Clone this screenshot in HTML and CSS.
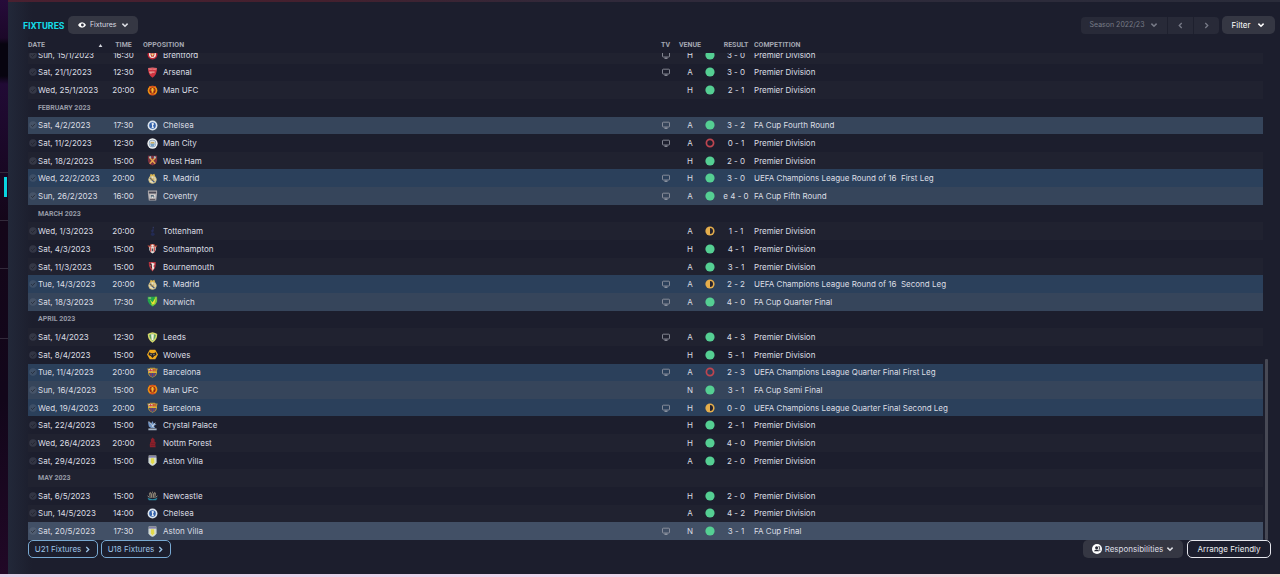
FILE: index.html
```html
<!DOCTYPE html>
<html lang="en">
<head>
<meta charset="utf-8">
<title>Fixtures</title>
<link rel="stylesheet" href="styles.css">
</head>
<body>
<svg class="sprite" aria-hidden="true">
  <symbol id="check" viewBox="0 0 8 8"><circle cx="4" cy="4" r="3.8" fill="#8a90a0" opacity=".2"/><path d="M2.2 4.2 3.5 5.5 6 2.8" fill="none" stroke="#151722" stroke-width="1" opacity=".6"/></symbol>
  <symbol id="chevron" viewBox="0 0 8 8"><path d="M1.4 2.6 4 5.2 6.6 2.6" fill="none" stroke="currentColor" stroke-width="1.5"/></symbol>
  <symbol id="right" viewBox="0 0 8 8"><path d="M2.6 1.2 5.4 4 2.6 6.8" fill="none" stroke="currentColor" stroke-width="1.5"/></symbol>
  <symbol id="left" viewBox="0 0 8 8"><path d="M5.4 1.2 2.6 4 5.4 6.8" fill="none" stroke="currentColor" stroke-width="1.5"/></symbol>
  <symbol id="tv" viewBox="0 0 8 8"><rect x=".5" y="1.2" width="7" height="4.8" rx=".7" fill="none" stroke="#9a9da8" stroke-width=".8"/><path d="M2.5 7.2h3" stroke="#b0b3bc" stroke-width="1"/></symbol>
  <symbol id="win" viewBox="0 0 10 10"><circle cx="5" cy="5" r="4.6" fill="#55cf93"/></symbol>
  <symbol id="loss" viewBox="0 0 10 10"><circle cx="5" cy="5" r="3.6" fill="none" stroke="#bd454f" stroke-width="1.7"/></symbol>
  <symbol id="draw" viewBox="0 0 10 10"><circle cx="5" cy="5" r="4.6" fill="#e5ae4c"/><path d="M5 2a3 3 0 0 1 0 6z" fill="#25232d"/></symbol>

  <symbol id="brentford" viewBox="0 0 12 12"><circle cx="6" cy="6" r="5.4" fill="#c12335"/><circle cx="6" cy="6" r="3.8" fill="#f2e9df"/><path d="M3.4 4.5h5.2L7.4 8.4H4.6z" fill="#c33637"/><path d="M4.5 6 6 7.5 7.5 6 6 5z" fill="#f0d873"/></symbol>
  <symbol id="arsenal" viewBox="0 0 12 12"><path d="M1.2 1.3Q6 .1 10.8 1.3 11 8.600 6 11.600 1 8.600 1.200 1.300z" fill="#cf3340"/><path d="M1.3 1.6Q6 .6 10.700 1.600M1.500 3Q6 2 10.500 3" fill="none" stroke="#ee8c8d" stroke-width=".8"/><path d="M2.300 5h6v1.200h-6zM3.500 6h1.500v1.400H3.500z" fill="#e5a09a"/></symbol>
  <symbol id="manutd" viewBox="0 0 12 12"><circle cx="6" cy="6" r="5.3" fill="#ee8f12"/><path d="M2.200 1.200h7.600L9.300 2.400H2.700zM2.500 9.800h7L8 11.200H4z" fill="#d8521c"/><circle cx="6" cy="6" r="3.400" fill="#8c1f14"/><path d="M5 3.300h2v5.200H5zM3.900 4.800h4.200v1.200H3.900z" fill="#f7b92c"/></symbol>
  <symbol id="chelsea" viewBox="0 0 12 12"><circle cx="6" cy="6" r="5.400" fill="#dbe5ef"/><circle cx="6" cy="6" r="3.600" fill="#3462ab"/><path d="M5 3.500 7 3l.6 1.500-1 1.500 1 2.700H5l.6-2z" fill="#e6edf3"/></symbol>
  <symbol id="mancity" viewBox="0 0 12 12"><circle cx="6" cy="6" r="5.600" fill="#eef1f2"/><circle cx="6" cy="6" r="4" fill="#8298b3"/><circle cx="6" cy="6" r="3.300" fill="#dce4e9"/><path d="M3.300 6h5.400Q8 9 6 9.500 4 9 3.300 6z" fill="#739fc4"/><path d="M4 4.300h4v1.700H4z" fill="#c8ad65"/></symbol>
  <symbol id="westham" viewBox="0 0 12 12"><path d="M1 .8h10v5.500Q10.500 10 6 11.500 1.500 10 1 6.300z" fill="#7e3240"/><path d="m2.500 2.500 6.500 7M9.500 2.500 3 9.500" stroke="#e7a84b" stroke-width="1.500"/><path d="m2 2.200 1.800-1 1 1.200-1.500 1.500zM10 2.200l-1.800-1-1 1.200 1.500 1.500z" fill="#9bc4d2"/></symbol>
  <symbol id="madrid" viewBox="0 0 12 12"><circle cx="6" cy="7.200" r="4.300" fill="#e8e2c5"/><path d="M3.200 3.400 4 .8l2 1 2-1 .8 2.600z" fill="#e1ba51"/><path d="M3 5.200 8.200 10" stroke="#425984" stroke-width="1.400"/><path d="M4.500 8.800V5l3 3.500V4.800" fill="none" stroke="#bb963f" stroke-width=".9"/><circle cx="6" cy="7.200" r="4" fill="none" stroke="#c9ac58" stroke-width=".7"/></symbol>
  <symbol id="coventry" viewBox="0 0 12 12"><path d="M1 .5h10v3L10 11.500H2L1 3.500z" fill="#b0acae"/><path d="M2 1.800h8v2H2z" fill="#494957"/><path d="M3 5h6v4H3z" fill="#e8e6e2"/><path d="M4 5.500h3l1 1v2H7V7H5v1.500H4z" fill="#536778"/><path d="M3 10.200h6" stroke="#45414a" stroke-width="1"/></symbol>
  <symbol id="tottenham" viewBox="0 0 12 12"><path d="M6.500 1 7.700 2 7 3 7.500 5 6.500 7H5L4.500 5 6 3.500z" fill="#262d57"/><circle cx="6.300" cy="9" r="2" fill="#222a53"/><path d="M6.300 1.400h.9" stroke="#5c65a0" stroke-width=".6"/></symbol>
  <symbol id="southampton" viewBox="0 0 12 12"><path d="M.6 2.500 3 3 4 1h4l1 2 2.400-.5L10 5H2z" fill="#b94a3b"/><path d="M2.500 4h7v3.500Q9 10 6 11.500 3 10 2.500 7.500z" fill="#e9e3dc"/><path d="M4 4.500v5M8 4.500v5" stroke="#cc3d3f" stroke-width="1.200"/><path d="M5.200 6h1.600v3H5.200z" fill="#555059"/><circle cx="6" cy="2.800" r="1.300" fill="#eee"/></symbol>
  <symbol id="bournemouth" viewBox="0 0 12 12"><path d="M2 1h7.500Q10.500 6 6 11.500 1.500 7 2 1z" fill="#bc3540"/><path d="M5 1.500 8.500 3 7 5.500 8 7.500 6 10.500 5.500 7 4 5z" fill="#ede6df"/><path d="M3 3.500h1.800v4" fill="none" stroke="#2b2026" stroke-width="1"/></symbol>
  <symbol id="norwich" viewBox="0 0 12 12"><path d="M.8 .8H11v5Q10 9.700 6 11.700 2 9.700.8 5.500z" fill="#21a64b"/><path d="M8.500 .8H11v5Q10 9.700 6.500 11L4 9.500 8.500 5z" fill="#84c63b"/><path d="M3 3.500 6 7 9.500 1.500 8 8.500 5.500 9z" fill="#f1e332"/><path d="M1.500 1.700h3v1h-3z" fill="#d8db8a"/></symbol>
  <symbol id="leeds" viewBox="0 0 12 12"><path d="M.8 2.200 3 1.200 6 .3l3 .9 2.200 1q0 6.500-5.200 9.600Q.8 8.700.8 2.200z" fill="#d5d86a"/><path d="M2.300 3.200 6 2l3.700 1.200Q9.500 7 6 10 2.500 7 2.300 3.200z" fill="#5fa564"/><path d="M4.500 2.500h3L7 9H5z" fill="#f2f2dc"/></symbol>
  <symbol id="wolves" viewBox="0 0 12 12"><path d="M3 .8h6L12 6l-3 5.200H3L0 6z" fill="#f0a91c"/><path d="M2.200 3.500 5 4.700h2l2.800-1.200.5 3L8 7.500 6 9.800 4 7.500 1.700 6.500z" fill="#22202a"/><path d="m3.700 5.700 1.500.7M8.300 5.700l-1.500.7" stroke="#f3d890" stroke-width=".8"/></symbol>
  <symbol id="barcelona" viewBox="0 0 12 12"><path d="M.3 1.700Q3 1.700 3.500.7h5Q9 1.700 11.700 1.700l-.9 2.800q1.200 4.800-4.800 7.200Q0 9.300 1.200 4.500z" fill="#b89338"/><path d="M1.700 2.300H6v2.500H1.700z" fill="#e5ded0"/><path d="M3.500 2.200h1v2.700h-1zM1.800 3.200H6v.8H1.800z" fill="#d1333c"/><path d="M6.300 2.200h1v2.700h-1zM8.300 2.200h1v2.700h-1z" fill="#d43b34"/><path d="M1.300 5h9.400v1.400H1.300z" fill="#e5b736"/><path d="M2 6.500h8L8.500 9.500 6 10.800 3.500 9.500z" fill="#31528f"/><path d="M4.500 6.500v3.500M7.500 6.500v3.500" stroke="#a83147" stroke-width="1.200"/></symbol>
  <symbol id="palace" viewBox="0 0 12 12"><path d="M1 2 4.500 4 6 1l1.500 3 3 .5-3 2 1.500 2.200H4.500L2 7z" fill="#7295c5"/><path d="m2 1.500 3 3.300 2 3.200M9 3 6 7" stroke="#dae4ed" stroke-width="1"/><path d="M1.500 9.200h9v2h-9z" fill="#a5b4c5"/></symbol>
  <symbol id="forest" viewBox="0 0 12 12"><path d="M6 .5 8.500 3 8 4.500 9.500 6 9 8.500l.5 2.800h-6.300L3 8.500 3.500 6 4.500 4.500 4 3z" fill="#8d202b"/><path d="M4 7h4.500M4 9.200h4.500" stroke="#661d27" stroke-width=".7"/></symbol>
  <symbol id="villa" viewBox="0 0 12 12"><path d="M1.800 .5h8.400v8Q9 10.800 6 11.800 3 10.800 1.800 8.500z" fill="#d9dfcb"/><path d="M2.200 .9h7.600v2H2.200z" fill="#8381aa"/><path d="M4.300 3.500h3.400L8 8 6 10.300 4.200 8z" fill="#e2d94a"/><path d="M2 3v5.500Q3 10.600 6 11.600 9 10.600 10 8.500V3" fill="none" stroke="#b9c7d4" stroke-width=".7"/></symbol>
  <symbol id="newcastle" viewBox="0 0 12 12"><path d="M2 4 3.500 2 5 4l1-3 1 3 1.500-2L10 4 9 8.500H3z" fill="#8e8574"/><path d="M3.500 4v4M6 3v5.500M8.500 4v4" stroke="#383741" stroke-width=".9"/><path d="M.7 6.500 2.500 8M11.300 6.500 9.500 8" stroke="#aaa695" stroke-width="1"/><path d="M.5 8.500Q6 11.500 11.500 8.500L10 11.300H2z" fill="#288aa4"/></symbol>
</svg>

<div class="app">
  <nav class="rail" aria-label="Main">
    <span class="rail-top"></span>
    <span class="rail-item rail-item-active"></span>
    <span class="rail-item"></span>
    <span class="rail-item rail-item-tall"></span>
    <span class="rail-item"></span>
  </nav>
  <main class="panel">
    <header class="toolbar">
      <div class="group">
        <h1 class="title">FIXTURES</h1>
        <button class="btn btn-view" type="button">
          <svg class="icon icon-eye" viewBox="0 0 8 8"><path d="M0 4Q1.500 1.200 4 1.200T8 4Q6.500 6.800 4 6.800T0 4z" fill="#fff"/><circle cx="4.400" cy="4" r="1.400" fill="#30323f"/></svg>
          Fixtures
          <svg class="icon"><use href="#chevron"/></svg>
        </button>
      </div>
      <div class="group group-right">
        <div class="season">
          <button class="season-part season-name" type="button">Season 2022/23 <svg class="icon"><use href="#chevron"/></svg></button>
          <button class="season-part season-step" type="button" aria-label="Previous season"><svg class="icon icon-small"><use href="#left"/></svg></button>
          <button class="season-part season-step" type="button" aria-label="Next season"><svg class="icon icon-small"><use href="#right"/></svg></button>
        </div>
        <button class="btn btn-filter" type="button">Filter <svg class="icon"><use href="#chevron"/></svg></button>
      </div>
    </header>

    <div class="list">
      <div class="scroller" id="scroller">
        <table class="fixtures">
          <colgroup>
            <col class="c-check"><col class="c-date"><col class="c-time"><col class="c-badge"><col class="c-team">
            <col class="c-tv"><col class="c-venue"><col class="c-form"><col class="c-result"><col>
          </colgroup>
          <thead>
            <tr>
              <th colspan="2" scope="col"><span class="sorted">DATE <svg class="sort" viewBox="0 0 5 4"><path d="M0 4 2.500 0 5 4z" fill="#d5d7de"/></svg></span></th>
              <th class="mid" scope="col">TIME</th>
              <th class="h-team" colspan="2" scope="col">OPPOSITION</th>
              <th class="mid" scope="col">TV</th>
              <th class="mid" scope="col">VENUE</th>
              <th></th>
              <th class="mid" scope="col">RESULT</th>
              <th scope="col">COMPETITION</th>
            </tr>
          </thead>
          <tbody id="rows"></tbody>
        </table>
      </div>
      <div class="track"><div class="thumb"></div></div>
    </div>

    <footer class="actions">
      <div class="group">
        <button class="btn btn-blue" type="button">U21 Fixtures <svg class="icon icon-small"><use href="#right"/></svg></button>
        <button class="btn btn-blue" type="button">U18 Fixtures <svg class="icon icon-small"><use href="#right"/></svg></button>
      </div>
      <div class="group group-end">
        <button class="btn btn-resp" type="button">
          <svg class="icon icon-person" viewBox="0 0 10 10"><circle cx="5" cy="5" r="5" fill="#fff"/><circle cx="4.600" cy="3.700" r="1.500" fill="#262834"/><path d="M2 7.200Q2.500 5.600 4.600 5.600T7.200 7.200z" fill="#262834"/><path d="M6.300 2.700h1.300v2.500H6.600M7 6.200h1.500" fill="none" stroke="#262834" stroke-width=".8"/></svg>
          Responsibilities
          <svg class="icon"><use href="#chevron"/></svg>
        </button>
        <button class="btn btn-outline" type="button">Arrange Friendly</button>
      </div>
    </footer>
  </main>
</div>
<div class="edge"></div>
<script src="fixtures.js"></script>
</body>
</html>
```

FILE: styles.css
```css
* { box-sizing: border-box; }

body {
  margin: 0;
  height: 100vh;
  display: flex;
  flex-direction: column;
  overflow: hidden;
  background: #1c1e2d;
  color: #dcdee4;
  font: 8px/12px Inter, "Liberation Sans", sans-serif;
}

button { font: inherit; color: inherit; border: 0; margin: 0; padding: 0; background: none; }

.sprite { position: absolute; width: 0; height: 0; }

.app { flex: 1; min-height: 0; display: flex; }

.rail {
  width: 8px;
  display: flex;
  flex-direction: column;
  background: linear-gradient(#260b3a 0, #1c0829 38px, #07040f 44px, #07040f 76px, #210a35 84px, #140619 220px, #12061a 400px, #210826);
}
.rail-top { height: 172px; }
.rail-item { height: 48px; border-top: 1px solid #332a3b; }
.rail-item-tall { height: 70px; }
.rail-item-active { display: flex; justify-content: flex-end; padding: 4px 1px 0 0; }
.rail-item-active::after { content: ""; width: 3px; height: 20px; background: #08d5e0; }

.panel {
  flex: 1;
  min-width: 0;
  display: flex;
  flex-direction: column;
  border-top: 2px solid #36283a;
  border-image: linear-gradient(90deg, #4a2030, #44202e 25%, #30293a 45%, #2a2c3a) 1;
  border-width: 2px 0 0;
  background: linear-gradient(90deg, #222839, #1c1e2d 24px);
}

.toolbar { display: flex; justify-content: space-between; padding: 14px 5px 0 15px; }
.group { display: flex; align-items: center; gap: 3px; }
.title { margin: 0 1px 0 0; padding-top: 2px; font: bold 9px/14px Roboto, sans-serif; color: #14dce8; }
.icon { width: 8px; height: 8px; flex: none; }
.icon-small { width: 7px; height: 7px; }
.icon-person { width: 10px; height: 10px; }

.btn {
  display: flex;
  align-items: center;
  justify-content: center;
  gap: 3px;
  height: 18px;
  border-radius: 5px;
  background: #353743;
  white-space: nowrap;
}
.btn-view { width: 70px; font-size: 7px; gap: 4px; }
.btn-filter { width: 53px; gap: 7px; color: #fff; }
.season { display: flex; height: 17px; border-radius: 4px; background: #282a38; color: #777a87; font-size: 7px; }
.season-part { display: flex; align-items: center; justify-content: center; }
.season-name { width: 86px; gap: 6px; }
.season-step { width: 26px; border-left: 1px solid #1e202e; }

.list { flex: 1; min-height: 0; display: flex; padding: 3px 12px 0 20px; }
.scroller { flex: 1; overflow: auto; scrollbar-width: none; }
.track { width: 5px; display: flex; flex-direction: column; justify-content: flex-end; align-items: flex-end; }
.thumb { width: 3px; height: 36%; background: #474955; border-radius: 1px; }

.fixtures { width: 100%; height: 510px; table-layout: fixed; border-collapse: collapse; }
.fixtures th, .fixtures td { padding: 0; white-space: nowrap; text-align: left; line-height: 12px; }
.fixtures th {
  position: sticky;
  top: 0;
  z-index: 1;
  height: 16px;
  background: #1c1e2d;
  color: #a3a6b1;
  font: bold 7px/16px Roboto, sans-serif;
}
.fixtures .mid { text-align: center; }
.fixtures .h-team { padding-left: 2px; }
.sorted { display: flex; align-items: center; justify-content: space-between; padding-right: 3px; }
.sort { width: 5px; height: 3px; }
.c-check { width: 10px; }
.c-date { width: 68px; }
.c-time { width: 35px; }
.c-badge { width: 22px; }
.c-team { width: 490px; }
.c-tv { width: 25px; }
.c-venue { width: 24px; }
.c-form { width: 16px; }
.c-result { width: 36px; }

.fixtures td svg { display: block; margin: 0 auto; }
.row-check { width: 8px; height: 8px; }
.row-badge { width: 11px; height: 11px; }
.row-form { width: 10px; height: 10px; }

.alt { background: #202230; }
.cup { background: #36455b; }
.euro { background: #2b405b; }
.final { background: #425066; }
.fixtures .month { color: #969aa6; font: bold 7px/12px Roboto, sans-serif; }

.actions { display: flex; justify-content: space-between; padding: 0 9px 16px 20px; }
.group-end { gap: 4px; }
.btn-blue { width: 70px; border: 1px solid #78a9d2; background: none; color: #9cc3e6; }
.btn-resp { width: 100px; }
.btn-outline { width: 84px; border: 1px solid #e5e6ec; background: none; color: #eceef2; }

.edge { height: 3px; background: linear-gradient(90deg, #e2cfe6, #edd3ea 45%, #f3d2d4 85%, #f2d2cc); }
```

FILE: fixtures.js
```js
const PL = "Premier Division";
const CL = "UEFA Champions League ";

// date, time, badge, opponent, televised, venue, form, result, competition, row style
const fixtures = [
  ["Sun, 15/1/2023", "16:30", "brentford", "Brentford", 1, "H", "win", "3 - 0", PL, "alt"],
  ["Sat, 21/1/2023", "12:30", "arsenal", "Arsenal", 1, "A", "win", "3 - 0", PL, ""],
  ["Wed, 25/1/2023", "20:00", "manutd", "Man UFC", 0, "H", "win", "2 - 1", PL, "alt"],
  ["FEBRUARY 2023", ""],
  ["Sat, 4/2/2023", "17:30", "chelsea", "Chelsea", 1, "A", "win", "3 - 2", "FA Cup Fourth Round", "cup"],
  ["Sat, 11/2/2023", "12:30", "mancity", "Man City", 1, "A", "loss", "0 - 1", PL, ""],
  ["Sat, 18/2/2023", "15:00", "westham", "West Ham", 0, "H", "win", "2 - 0", PL, "alt"],
  ["Wed, 22/2/2023", "20:00", "madrid", "R. Madrid", 1, "H", "win", "3 - 0", CL + "Round of 16\u00a0 First Leg", "euro"],
  ["Sun, 26/2/2023", "16:00", "coventry", "Coventry", 1, "A", "win", "e 4 - 0", "FA Cup Fifth Round", "cup"],
  ["MARCH 2023", ""],
  ["Wed, 1/3/2023", "20:00", "tottenham", "Tottenham", 0, "A", "draw", "1 - 1", PL, "alt"],
  ["Sat, 4/3/2023", "15:00", "southampton", "Southampton", 0, "H", "win", "4 - 1", PL, ""],
  ["Sat, 11/3/2023", "15:00", "bournemouth", "Bournemouth", 0, "A", "win", "3 - 1", PL, "alt"],
  ["Tue, 14/3/2023", "20:00", "madrid", "R. Madrid", 1, "A", "draw", "2 - 2", CL + "Round of 16\u00a0 Second Leg", "euro"],
  ["Sat, 18/3/2023", "17:30", "norwich", "Norwich", 1, "A", "win", "4 - 0", "FA Cup Quarter Final", "cup"],
  ["APRIL 2023", ""],
  ["Sat, 1/4/2023", "12:30", "leeds", "Leeds", 1, "A", "win", "4 - 3", PL, "alt"],
  ["Sat, 8/4/2023", "15:00", "wolves", "Wolves", 0, "H", "win", "5 - 1", PL, ""],
  ["Tue, 11/4/2023", "20:00", "barcelona", "Barcelona", 1, "A", "loss", "2 - 3", CL + "Quarter Final First Leg", "euro"],
  ["Sun, 16/4/2023", "15:00", "manutd", "Man UFC", 0, "N", "win", "3 - 1", "FA Cup Semi Final", "cup"],
  ["Wed, 19/4/2023", "20:00", "barcelona", "Barcelona", 1, "H", "draw", "0 - 0", CL + "Quarter Final Second Leg", "euro"],
  ["Sat, 22/4/2023", "15:00", "palace", "Crystal Palace", 0, "H", "win", "2 - 1", PL, ""],
  ["Wed, 26/4/2023", "20:00", "forest", "Nottm Forest", 0, "H", "win", "4 - 0", PL, "alt"],
  ["Sat, 29/4/2023", "15:00", "villa", "Aston Villa", 0, "A", "win", "2 - 0", PL, ""],
  ["MAY 2023", "alt"],
  ["Sat, 6/5/2023", "15:00", "newcastle", "Newcastle", 0, "H", "win", "2 - 0", PL, ""],
  ["Sun, 14/5/2023", "14:00", "chelsea", "Chelsea", 0, "A", "win", "4 - 2", PL, "alt"],
  ["Sat, 20/5/2023", "17:30", "villa", "Aston Villa", 1, "N", "win", "3 - 1", "FA Cup Final", "final"]
];

const icon = (id, cls) => `<svg class="${cls}" aria-hidden="true"><use href="#${id}"/></svg>`;

document.getElementById("rows").innerHTML = fixtures.map(f => {
  if (f.length === 2) return `<tr class="${f[1]}"><td></td><td class="month" colspan="9">${f[0]}</td></tr>`;
  const [date, time, badge, team, tv, venue, form, result, competition, style] = f;
  return `<tr class="${style}"><td>${icon("check", "row-check")}</td><td>${date}</td><td class="mid">${time}</td>` +
    `<td>${icon(badge, "row-badge")}</td><td>${team}</td><td>${tv ? icon("tv", "row-check") : ""}</td>` +
    `<td class="mid">${venue}</td><td>${icon(form, "row-form")}</td><td class="mid">${result}</td><td>${competition}</td></tr>`;
}).join("");

// Open the list at the end of the season
const scroller = document.getElementById("scroller");
scroller.scrollTop = scroller.scrollHeight;
```
